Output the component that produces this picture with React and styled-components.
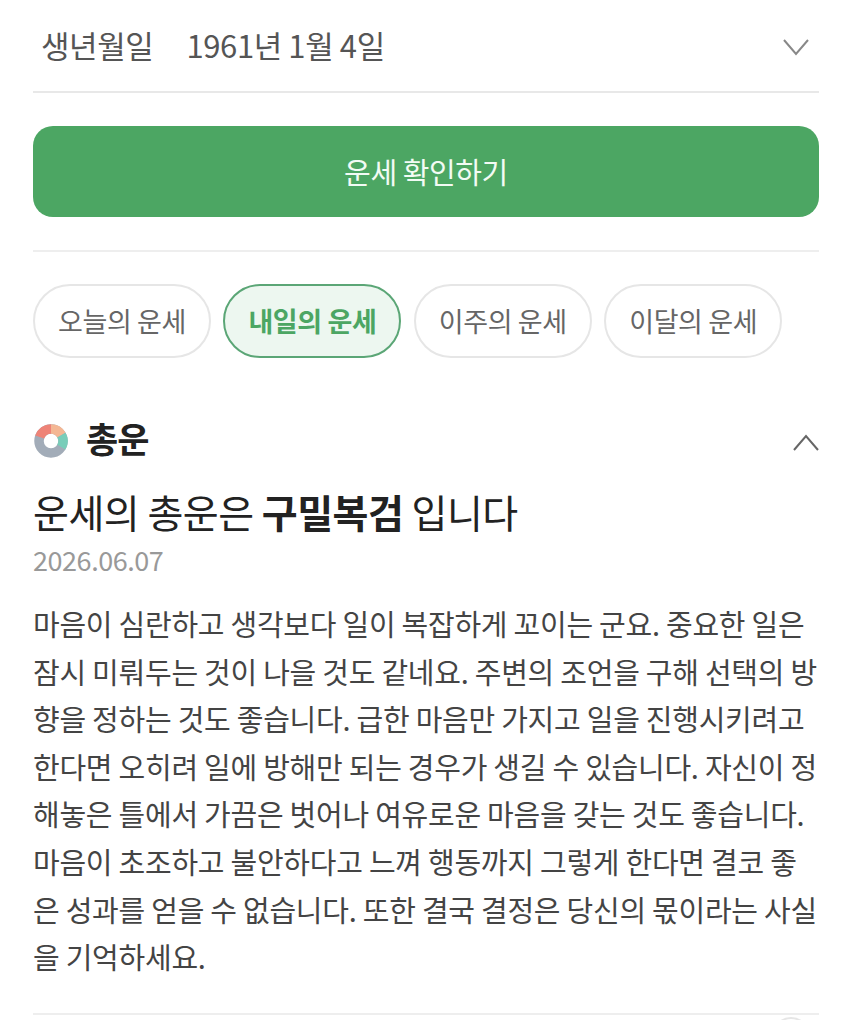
import React from "react";
import styled, { createGlobalStyle } from "styled-components";

const Global = createGlobalStyle`
  html, body { margin: 0; padding: 0; background: #fff; }
  body { width: 850px; height: 1020px; overflow: hidden; font-family: "Noto Sans CJK KR", "Noto Sans", sans-serif; }
`;

const Page = styled.div`
  width: 850px; height: 1020px; box-sizing: border-box; padding: 0 31px 0 33px; overflow: hidden;
`;
const BirthRow = styled.div`
  height: 93px; box-sizing: border-box; border-bottom: 2px solid #e8e8e8;
  display: flex; align-items: center; padding: 0 0 3px 8px; color: #555; font-size: 31px; letter-spacing: -0.4px;
`;
const BirthLabel = styled.span` margin-right: 33px; `;
const BirthValue = styled.span` flex: 1; `;
const Chevron = styled.svg` width: 30px; height: 20px; margin-right: ${p => p.$end || 8}px; margin-top: 6px; `;
const CheckButton = styled.button`
  display: block; width: 100%; height: 91px; margin-top: 33px; border: 0; border-radius: 20px; background: #4ca663;
  color: #f2fbf4; font: inherit; font-size: 29px; letter-spacing: -0.4px; padding: 0 0 2px;
`;
const Rule = styled.div` height: 2px; background: #eeeeee; margin-top: 33px; `;
const Tabs = styled.div` display: flex; gap: 12.4px; margin-top: 32px; `;
const Tab = styled.div`
  width: 178px; height: 74px; box-sizing: border-box; border-radius: 37px; display: flex; align-items: center; justify-content: center;
  font-size: 27px; letter-spacing: -0.4px; padding-bottom: 2px;
  border: 2px solid ${p => p.$active ? "#5ba676" : "#e6e6e6"};
  background: ${p => p.$active ? "#edf7f0" : "#fff"};
  color: ${p => p.$active ? "#4ca663" : "#666"};
  font-weight: ${p => p.$active ? 700 : 400};
`;
const SectionHead = styled.div` display: flex; align-items: center; margin-top: 54px; height: 56px; `;
const Donut = styled.svg` width: 36px; height: 36px; margin-right: 17px; `;
const SectionTitle = styled.h2` flex: 1; margin: 0; padding-bottom: 6px; font-size: 35px; font-weight: 700; color: #222; letter-spacing: -1px; `;
const Headline = styled.h3` margin: 18px 0 0; font-size: 39px; line-height: 50px; font-weight: 400; color: #222; letter-spacing: -0.5px; `;
const Strong = styled.b` font-weight: 700; `;
const DateLine = styled.div` margin-top: 4px; font-size: 27px; line-height: 40px; color: #999; letter-spacing: -0.45px; `;
const Body = styled.p` margin: 20px 0 0; font-size: 29px; line-height: 47.6px; color: #444; letter-spacing: -0.25px; white-space: nowrap; `;
const BottomRule = styled.div` height: 2px; background: #eeeeee; margin-top: 32px; `;
const NextRow = styled.div` display: flex; justify-content: flex-end; padding: 2px 9px 0 0; `;
const NextCircle = styled.div` width: 38px; height: 38px; box-sizing: border-box; border: 2px solid #e6e6e6; border-radius: 50%; `;

const lines = [
  "마음이 심란하고 생각보다 일이 복잡하게 꼬이는 군요. 중요한 일은",
  "잠시 미뤄두는 것이 나을 것도 같네요. 주변의 조언을 구해 선택의 방",
  "향을 정하는 것도 좋습니다. 급한 마음만 가지고 일을 진행시키려고",
  "한다면 오히려 일에 방해만 되는 경우가 생길 수 있습니다. 자신이 정",
  "해놓은 틀에서 가끔은 벗어나 여유로운 마음을 갖는 것도 좋습니다.",
  "마음이 초조하고 불안하다고 느껴 행동까지 그렇게 한다면 결코 좋",
  "은 성과를 얻을 수 없습니다. 또한 결국 결정은 당신의 몫이라는 사실",
  "을 기억하세요.",
];

export default function App() {
  return (
    <Page>
      <Global />
      <BirthRow>
        <BirthLabel>생년월일</BirthLabel>
        <BirthValue>1961년 1월 4일</BirthValue>
        <Chevron viewBox="0 0 30 20"><path d="M3 3 L15 17 L27 3" fill="none" stroke="#888" strokeWidth="2" /></Chevron>
      </BirthRow>
      <CheckButton>운세 확인하기</CheckButton>
      <Rule />
      <Tabs>
        <Tab>오늘의 운세</Tab>
        <Tab $active>내일의 운세</Tab>
        <Tab>이주의 운세</Tab>
        <Tab>이달의 운세</Tab>
      </Tabs>
      <SectionHead>
        <Donut viewBox="0 0 36 36">
          <g fill="none" strokeWidth="9.5">
            <circle cx="18" cy="19" r="12" stroke="#a2acb8" />
            <path d="M6.7 15 A12 12 0 0 1 18 7" stroke="#ee8377" />
            <path d="M18 7 A12 12 0 0 1 28.4 13" stroke="#f4b794" />
            <path d="M28.4 13 A12 12 0 0 1 28.4 25" stroke="#78cdb9" />
          </g>
        </Donut>
        <SectionTitle>총운</SectionTitle>
        <Chevron viewBox="0 0 30 20" $end={-2}><path d="M3 17 L15 3 L27 17" fill="none" stroke="#666" strokeWidth="2" /></Chevron>
      </SectionHead>
      <Headline>운세의 총운은 <Strong>구밀복검</Strong> 입니다</Headline>
      <DateLine>2026.06.07</DateLine>
      <Body>{lines.map(l => <React.Fragment key={l}>{l}<br /></React.Fragment>)}</Body>
      <BottomRule />
      <NextRow><NextCircle /></NextRow>
    </Page>
  );
}
